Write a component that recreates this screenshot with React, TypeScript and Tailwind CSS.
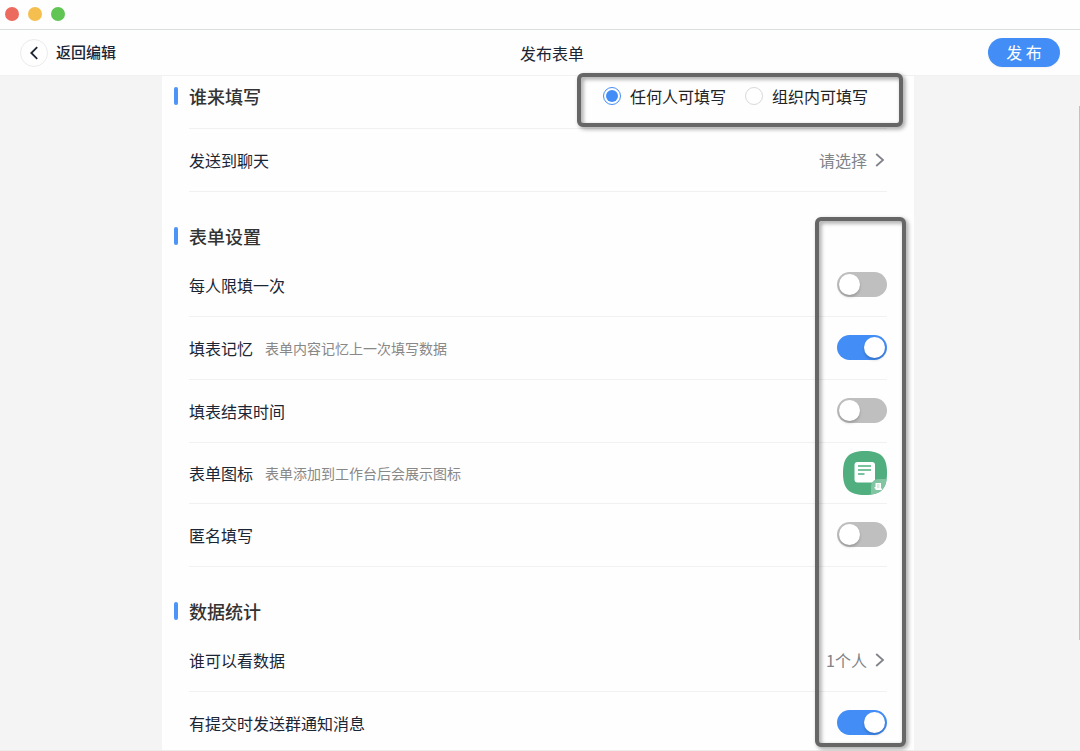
import React, { useState } from 'react';

const switchClass =
  "relative h-[25px] w-[50px] shrink-0 cursor-pointer appearance-none rounded-full bg-[#bfbfbf] transition-colors checked:bg-[#438ef6] before:absolute before:left-[2px] before:top-[2px] before:size-[21px] before:rounded-full before:bg-white before:shadow-[0_2px_3px_rgba(0,0,0,0.2)] before:content-[''] checked:before:left-[27px]";

const radioClass =
  "relative size-[18px] shrink-0 cursor-pointer appearance-none rounded-full border border-[#d9d9d9] bg-white checked:border-[#438ef6] checked:before:absolute checked:before:inset-[2px] checked:before:rounded-full checked:before:bg-[#438ef6] checked:before:content-['']";

const audiences = [
  { value: 'anyone', label: '任何人可填写' },
  { value: 'org', label: '组织内可填写' },
];

function Chevron({ flip = false }: { flip?: boolean }) {
  return (
    <svg width="10" height="14" viewBox="0 0 10 14" fill="none" stroke="currentColor" strokeWidth="1.8" aria-hidden="true">
      <path d={flip ? 'M8.2 1.2 2.3 7l5.9 5.8' : 'M1.2 1 8 7l-6.8 6'} />
    </svg>
  );
}

function FormIcon() {
  return (
    <svg width="44" height="44" viewBox="0 0 44 44" aria-hidden="true">
      <defs>
        <clipPath id="squircle">
          <path d="M22 0C38 0 44 6 44 22S38 44 22 44 0 38 0 22 6 0 22 0Z" />
        </clipPath>
      </defs>
      <g clipPath="url(#squircle)">
        <rect width="44" height="44" fill="#50ae7f" />
        <rect x="11.5" y="11" width="20.5" height="20.5" rx="3" fill="#fff" />
        <path d="M15 15h13M15 19h13M15 23h6.5" stroke="#50ae7f" strokeWidth="1.7" />
        <path d="M28 44v-8c0-5 3-8 8-8h8v16Z" fill="#82c5a3" />
        <path d="M32.5 32h5.5v5.5h1V39h-6.5v-1.500h-1V36h1Z" fill="#fff" />
        <path d="M34 34h2.500M34 36h2.500" stroke="#82c5a3" strokeWidth="0.6" />
      </g>
    </svg>
  );
}

function SectionTitle({ children }: { children: React.ReactNode }) {
  return (
    <h2 className="-ml-[15px] flex items-center gap-[11px] text-[18px] leading-9 font-medium text-[#333]">
      <span className="h-[18px] w-1 rounded-sm bg-[#4c94f8]" />
      {children}
    </h2>
  );
}

const rowClass = 'flex h-[63px] items-center justify-between border-b border-[#f1f1f1] pb-px';

type SwitchRowProps = { id: string; label: string; hint?: string; on?: boolean };

function SwitchRow({ id, label, hint, on = false }: SwitchRowProps) {
  const [checked, setChecked] = useState(on);

  return (
    <div className={rowClass}>
      <div className="flex items-center gap-3">
        <label htmlFor={id}>{label}</label>
        {hint && <span className="text-sm text-[#888]">{hint}</span>}
      </div>
      <input
        id={id}
        type="checkbox"
        role="switch"
        className={switchClass}
        checked={checked}
        onChange={e => setChecked(e.target.checked)}
      />
    </div>
  );
}

function LinkRow({ label, value }: { label: string; value: string }) {
  return (
    <div className={rowClass}>
      <span>{label}</span>
      <button type="button" aria-label={`${label} ${value}`} className="flex cursor-pointer items-center gap-2 pr-[2px] text-[#808388]">
        {value}
        <Chevron />
      </button>
    </div>
  );
}

function App() {
  const [audience, setAudience] = useState('anyone');

  return (
    <div className="flex h-screen flex-col border-b border-[#ededed] bg-[#f4f4f4] font-['Noto_Sans_CJK_SC',sans-serif] text-base text-[#1b2533]">
      <div className="flex h-[30px] shrink-0 items-center gap-[9px] border-b border-[#dcdfdf] bg-[#fefefe] pb-[2px] pl-[5px]">
        <span className="size-[14px] rounded-full bg-[#ec6a5e]" />
        <span className="size-[14px] rounded-full bg-[#f4bf4f]" />
        <span className="size-[14px] rounded-full bg-[#61c554]" />
      </div>

      <header className="flex h-[46px] shrink-0 items-center justify-between border-b border-[#f1f1f1] bg-[#fefefe] px-5">
        <a href="#edit" className="flex items-center gap-2 text-[15px] font-medium">
          <span className="flex size-7 items-center justify-center rounded-full border border-[#ebebeb]">
            <Chevron flip />
          </span>
          返回编辑
        </a>
        <h1>发布表单</h1>
        <button type="button" className="h-[29px] w-[72px] cursor-pointer rounded-full bg-[#438ef6] pb-[2px] text-white shadow-xs">
          发 布
        </button>
      </header>

      <div className="relative min-h-0 flex-1">
        <main className="h-full overflow-y-auto pr-1 [scrollbar-width:none]">
          <div className="mx-auto max-w-[752px] bg-[#fefefe] px-[27px]">
            <section>
              <div className="flex h-[53px] items-start justify-between border-b border-[#f1f1f1] pt-[2px]">
                <SectionTitle>谁来填写</SectionTitle>
                <div role="radiogroup" aria-label="谁来填写" className="flex h-9 items-center gap-[19px] pr-[19px] text-[#222]">
                  {audiences.map(({ value, label }) => (
                    <label key={value} className="flex cursor-pointer items-center gap-[9px]">
                      <input
                        type="radio"
                        name="audience"
                        className={radioClass}
                        checked={audience === value}
                        onChange={() => setAudience(value)}
                      />
                      {label}
                    </label>
                  ))}
                </div>
              </div>
              <LinkRow label="发送到聊天" value="请选择" />
            </section>

            <section className="pt-[26px]">
              <SectionTitle>表单设置</SectionTitle>
              <SwitchRow id="once" label="每人限填一次" />
              <SwitchRow id="memory" label="填表记忆" hint="表单内容记忆上一次填写数据" on />
              <SwitchRow id="deadline" label="填表结束时间" />
              <div className="flex h-[61px] items-center justify-between border-b border-[#f1f1f1]">
                <div className="flex items-center gap-3">
                  <span>表单图标</span>
                  <span className="text-sm text-[#888]">表单添加到工作台后会展示图标</span>
                </div>
                <button type="button" aria-label="表单图标" className="cursor-pointer">
                  <FormIcon />
                </button>
              </div>
              <SwitchRow id="anonymous" label="匿名填写" />
            </section>

            <section className="pt-[26px]">
              <SectionTitle>数据统计</SectionTitle>
              <LinkRow label="谁可以看数据" value="1个人" />
              <SwitchRow id="notify" label="有提交时发送群通知消息" on />
            </section>
          </div>
        </main>

        {/* highlight frames over the options */}
        <div className="pointer-events-none absolute inset-0 pr-1">
          <div className="relative mx-auto h-full max-w-[752px]">
            <div className="absolute -top-[3px] right-[11px] h-[54px] w-[326px] rounded-md border-4 border-[#666] drop-shadow-[2px_2px_2px_rgba(0,0,0,0.4)]" />
            <div className="absolute top-[141px] right-[8px] bottom-[3px] w-[91px] rounded-md border-4 border-[#666] drop-shadow-[2px_2px_2px_rgba(0,0,0,0.4)]" />
          </div>
        </div>

        <div className="absolute top-[30px] right-0 bottom-[110px] w-px bg-[#c1c1c1]" />
      </div>
    </div>
  );
}

export default App;
